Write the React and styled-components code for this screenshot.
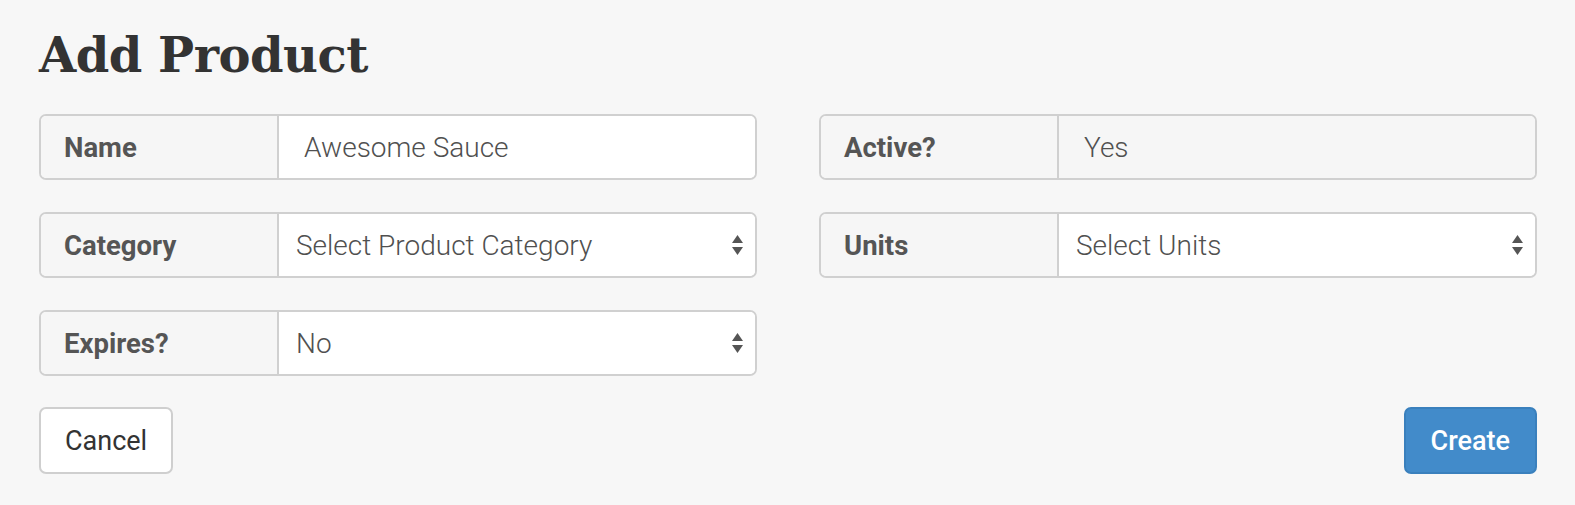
import React, { Component } from "react";
import styled, { createGlobalStyle } from "styled-components";

const GlobalStyle = createGlobalStyle`
  html, body {
    margin: 0;
    padding: 0;
    background: #f7f7f7;
  }
  body {
    font-family: Roboto, "Liberation Sans", sans-serif;
    color: #333;
  }
`;

const Page = styled.div`
  padding: 20px 38px 0 39px;
`;

const Title = styled.h1`
  margin: 0 0 24px;
  font-family: "DejaVu Serif", "Liberation Serif", serif;
  font-weight: bold;
  font-size: 48px;
  line-height: 70px;
  color: #333;
  letter-spacing: -0.5px;
`;

const FormGrid = styled.div`
  display: grid;
  grid-template-columns: 718px 718px;
  column-gap: 62px;
  row-gap: 32px;
`;

const Group = styled.div`
  display: flex;
  height: 66px;
  box-sizing: border-box;
  border: 2px solid #d0d0d0;
  border-radius: 7px;
  background: #fff;
  overflow: hidden;
`;

const Label = styled.label`
  flex: 0 0 238px;
  box-sizing: border-box;
  display: flex;
  align-items: center;
  padding-left: 23px;
  background: #f6f6f6;
  border-right: 2px solid #d0d0d0;
  font-size: 27.5px;
  font-weight: bold;
  color: #555;
`;

const InputText = styled.input`
  flex: 1;
  min-width: 0;
  border: 0;
  outline: none;
  padding: 0 0 0 25px;
  font-family: Roboto, "Liberation Sans", sans-serif;
  font-size: 28px;
  font-weight: 300;
  color: #505050;
  background: ${(p) => (p.disabled ? "#f6f6f6" : "#fff")};
`;

const SelectWrap = styled.div`
  flex: 1;
  position: relative;
  display: flex;
`;

const Select = styled.select`
  flex: 1;
  appearance: none;
  -webkit-appearance: none;
  border: 0;
  outline: none;
  background: #fff;
  padding: 0 40px 0 17px;
  font-family: Roboto, "Liberation Sans", sans-serif;
  font-size: 28px;
  font-weight: 300;
  color: #505050;
`;

const Arrows = styled.svg`
  position: absolute;
  right: 11px;
  top: 50%;
  transform: translateY(-50%);
  pointer-events: none;
`;

const Footer = styled.div`
  display: flex;
  justify-content: space-between;
  margin-top: 31px;
`;

const Button = styled.button`
  height: 67px;
  box-sizing: border-box;
  padding: 0 ${(p) => (p.primary ? "25px" : "24px")};
  border-radius: 7px;
  font-family: Roboto, "Liberation Sans", sans-serif;
  font-size: 27px;
  font-weight: ${(p) => (p.primary ? 500 : 400)};
  color: ${(p) => (p.primary ? "#fff" : "#333")};
  background: ${(p) => (p.primary ? "#428bca" : "#fff")};
  border: 2px solid ${(p) => (p.primary ? "#3a80bd" : "#cfcfcf")};
  cursor: pointer;
`;

const SelectArrows = () => (
  <Arrows width="13" height="22" viewBox="0 0 13 22">
    <path d="M6.5 1 L12 9 L1 9 Z" fill="#555" />
    <path d="M1 13 L12 13 L6.5 21 Z" fill="#555" />
  </Arrows>
);

class ProductsInsert extends Component {
  constructor(props) {
    super(props);

    this.state = {
      name: "Awesome Sauce",
      category: "",
      units: "",
      expires: "no",
    };
  }

  handleChange = (field) => (event) => {
    this.setState({ [field]: event.target.value });
  };

  render() {
    const { name, category, units, expires } = this.state;
    return (
      <Page>
        <GlobalStyle />
        <Title>Add Product</Title>

        <FormGrid>
          <Group>
            <Label>Name</Label>
            <InputText
              type="text"
              value={name}
              onChange={this.handleChange("name")}
            />
          </Group>
          <Group>
            <Label>Active?</Label>
            <InputText type="text" value="Yes" disabled readOnly />
          </Group>

          <Group>
            <Label>Category</Label>
            <SelectWrap>
              <Select value={category} onChange={this.handleChange("category")}>
                <option value="">Select Product Category</option>
              </Select>
              <SelectArrows />
            </SelectWrap>
          </Group>
          <Group>
            <Label>Units</Label>
            <SelectWrap>
              <Select value={units} onChange={this.handleChange("units")}>
                <option value="">Select Units</option>
              </Select>
              <SelectArrows />
            </SelectWrap>
          </Group>

          <Group>
            <Label>Expires?</Label>
            <SelectWrap>
              <Select value={expires} onChange={this.handleChange("expires")}>
                <option value="no">No</option>
                <option value="yes">Yes</option>
              </Select>
              <SelectArrows />
            </SelectWrap>
          </Group>
        </FormGrid>

        <Footer>
          <Button>Cancel</Button>
          <Button primary>Create</Button>
        </Footer>
      </Page>
    );
  }
}

export default ProductsInsert;
